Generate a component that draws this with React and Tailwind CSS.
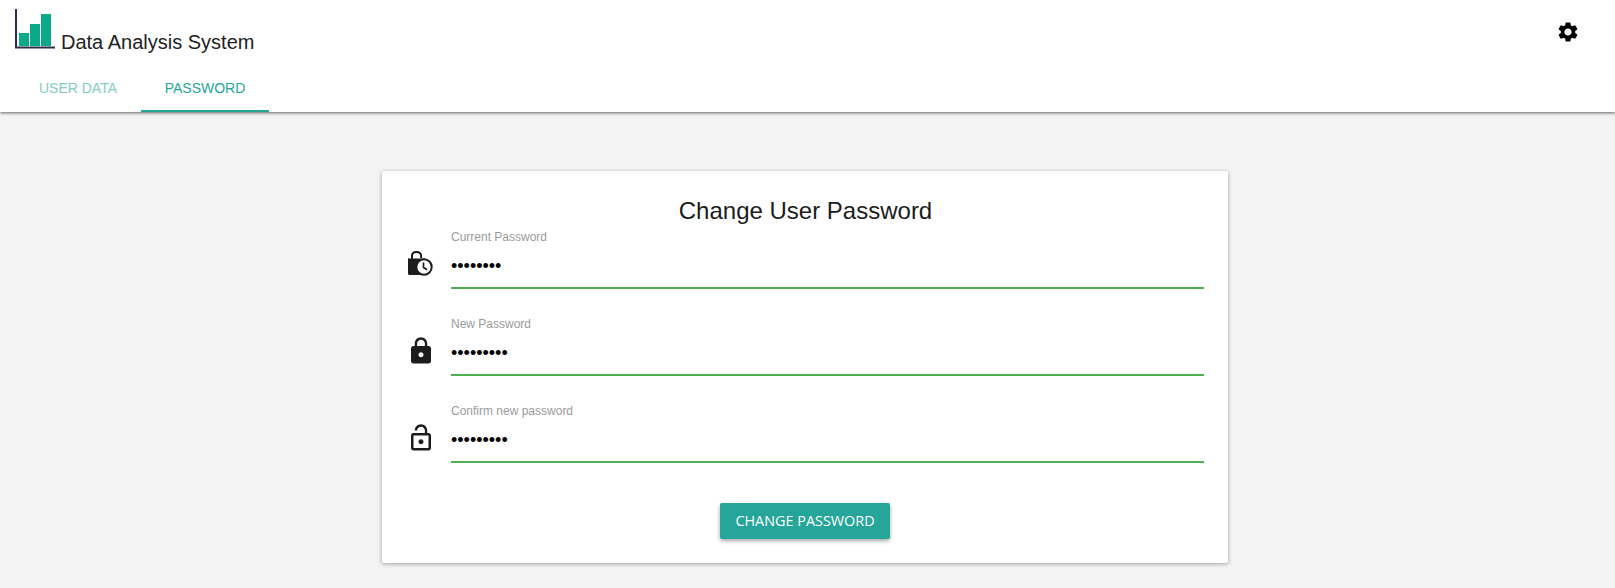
import React from "react";

const Field = ({ label, value, icon }) => (
  <div className="flex items-start h-[87px]">
    <div className="w-[69px] pl-[24px] pt-[20px] shrink-0">{icon}</div>
    <div className="flex-1 mr-6">
      <div className="h-[16px] text-[12px] leading-[16px] text-[#9b9b9b]">{label}</div>
      <input
        type="password"
        readOnly
        value={value}
        className="block w-full h-[44px] border-b-2 border-[#4caf50] bg-transparent text-[18px] text-black outline-none"
      />
    </div>
  </div>
);

const LockClock = () => (
  <svg width="30" height="30" viewBox="0 0 30 30">
    <path d="M6 10V6.6C6 4 8 2.9 10.5 2.9c2.4 0 4.4 1.2 4.6 3.6V9" fill="none" stroke="#1c1c1c" strokeWidth="2" />
    <path d="M3 9.5h15.5c.8 0 1.5.7 1.5 1.5v15H3.5c-.8 0-1.5-.7-1.5-1.5v-14c0-.8.3-1.5 1-1.5z" fill="#1c1c1c" />
    <circle cx="18" cy="18" r="7.7" fill="#fff" stroke="#1c1c1c" strokeWidth="2" />
    <path d="M17.5 13.5v5l3.6 2.3" fill="none" stroke="#1c1c1c" strokeWidth="1.7" />
  </svg>
);

const LockFilled = () => (
  <svg width="30" height="30" viewBox="0 0 24 24" fill="#1c1c1c">
    <path d="M18 8h-1V6c0-2.76-2.24-5-5-5S7 3.24 7 6v2H6c-1.1 0-2 .9-2 2v10c0 1.1.9 2 2 2h12c1.1 0 2-.9 2-2V10c0-1.1-.9-2-2-2zm-6 9c-1.1 0-2-.9-2-2s.9-2 2-2 2 .9 2 2-.9 2-2 2zm3.1-9H8.9V6c0-1.71 1.39-3.1 3.1-3.1 1.71 0 3.1 1.39 3.1 3.1v2z" />
  </svg>
);

const LockOpen = () => (
  <svg width="30" height="30" viewBox="0 0 24 24" fill="#1c1c1c">
    <path d="M12 17c1.1 0 2-.9 2-2s-.9-2-2-2-2 .9-2 2 .9 2 2 2zm6-9h-1V6c0-2.76-2.24-5-5-5S7 3.24 7 6h1.9c0-1.71 1.39-3.1 3.1-3.1 1.71 0 3.1 1.39 3.1 3.1v2H6c-1.1 0-2 .9-2 2v10c0 1.1.9 2 2 2h12c1.1 0 2-.9 2-2V10c0-1.1-.9-2-2-2zm0 12H6V10h12v10z" />
  </svg>
);

const Gear = () => (
  <svg width="24" height="24" viewBox="0 0 24 24" fill="#000">
    <path d="M19.14 12.94c.04-.3.06-.61.06-.94 0-.32-.02-.64-.07-.94l2.03-1.58c.18-.14.23-.41.12-.61l-1.92-3.32c-.12-.22-.37-.29-.59-.22l-2.39.96c-.5-.38-1.03-.7-1.62-.94l-.36-2.54c-.04-.24-.24-.41-.48-.41h-3.84c-.24 0-.43.17-.47.41l-.36 2.54c-.59.24-1.13.57-1.62.94l-2.39-.96c-.22-.08-.47 0-.59.22L2.74 8.87c-.12.21-.08.47.12.61l2.03 1.58c-.05.3-.09.63-.09.94s.02.64.07.94l-2.03 1.58c-.18.14-.23.41-.12.61l1.92 3.32c.12.22.37.29.59.22l2.39-.96c.5.38 1.03.7 1.62.94l.36 2.54c.05.24.24.41.48.41h3.84c.24 0 .44-.17.47-.41l.36-2.54c.59-.24 1.13-.56 1.62-.94l2.39.96c.22.08.47 0 .59-.22l1.92-3.32c.12-.22.07-.47-.12-.61l-2.01-1.58zM12 15.6c-1.98 0-3.6-1.62-3.6-3.6s1.62-3.6 3.6-3.6 3.6 1.62 3.6 3.6-1.62 3.6-3.6 3.6z" />
  </svg>
);

const Logo = () => (
  <svg width="40" height="40" viewBox="0 0 40 40" className="shrink-0">
    <rect x="4" y="24" width="10" height="13" fill="#0aa98a" />
    <rect x="15" y="15" width="10" height="22" fill="#0aa98a" />
    <rect x="26" y="5" width="10" height="32" fill="#0aa98a" />
    <path d="M1 0v38.5h39" fill="none" stroke="#2a2f4a" strokeWidth="2" />
  </svg>
);

export default function App() {
  return (
    <div className="min-h-[588px] bg-[#f3f3f3] font-['Liberation_Sans',Arial,sans-serif]">
      <header className="h-[112px] bg-white shadow-[0_1px_3px_rgba(0,0,0,0.6)] relative">
        <div className="flex justify-between items-start h-[64px] pl-[15px] pr-[35px] pt-[9px]">
          <div className="flex items-end">
            <Logo />
            <span className="ml-[6px] text-[20px] leading-[23px] text-[#222] mb-[-5px]">Data Analysis System</span>
          </div>
          <div className="mt-[11px]">
            <Gear />
          </div>
        </div>
        <nav className="flex pl-[15px] h-[48px]">
          <div className="w-[126px] h-[48px] flex items-center justify-center text-[14px] text-[#7fcdc5] uppercase">User Data</div>
          <div className="w-[128px] h-[48px] pt-[2px] flex items-center justify-center text-[14px] text-[#26a69a] uppercase border-b-2 border-[#26a69a]">Password</div>
        </nav>
      </header>
      <main className="flex justify-center pt-[59px] pr-[5px]">
        <div className="w-[846px] h-[392px] bg-white shadow-[0_1px_4px_rgba(0,0,0,0.35)] rounded-[2px] pt-[26px]">
          <h1 className="text-center text-[24px] leading-[28px] text-[#1c1c1c] ml-[1px]">Change User Password</h1>
          <div className="mt-[4px]">
            <Field label="Current Password" value="12345678" icon={<LockClock />} />
            <Field label="New Password" value="123456789" icon={<LockFilled />} />
            <Field label="Confirm new password" value="123456789" icon={<LockOpen />} />
          </div>
          <div className="flex justify-center mt-[13px]">
            <button className="w-[170px] h-[36px] rounded-[2px] bg-[#26a69a] text-white text-[14.4px] uppercase font-['Open_Sans',sans-serif] shadow-[0_2px_4px_rgba(0,0,0,0.35)]">Change Password</button>
          </div>
        </div>
      </main>
    </div>
  );
}
